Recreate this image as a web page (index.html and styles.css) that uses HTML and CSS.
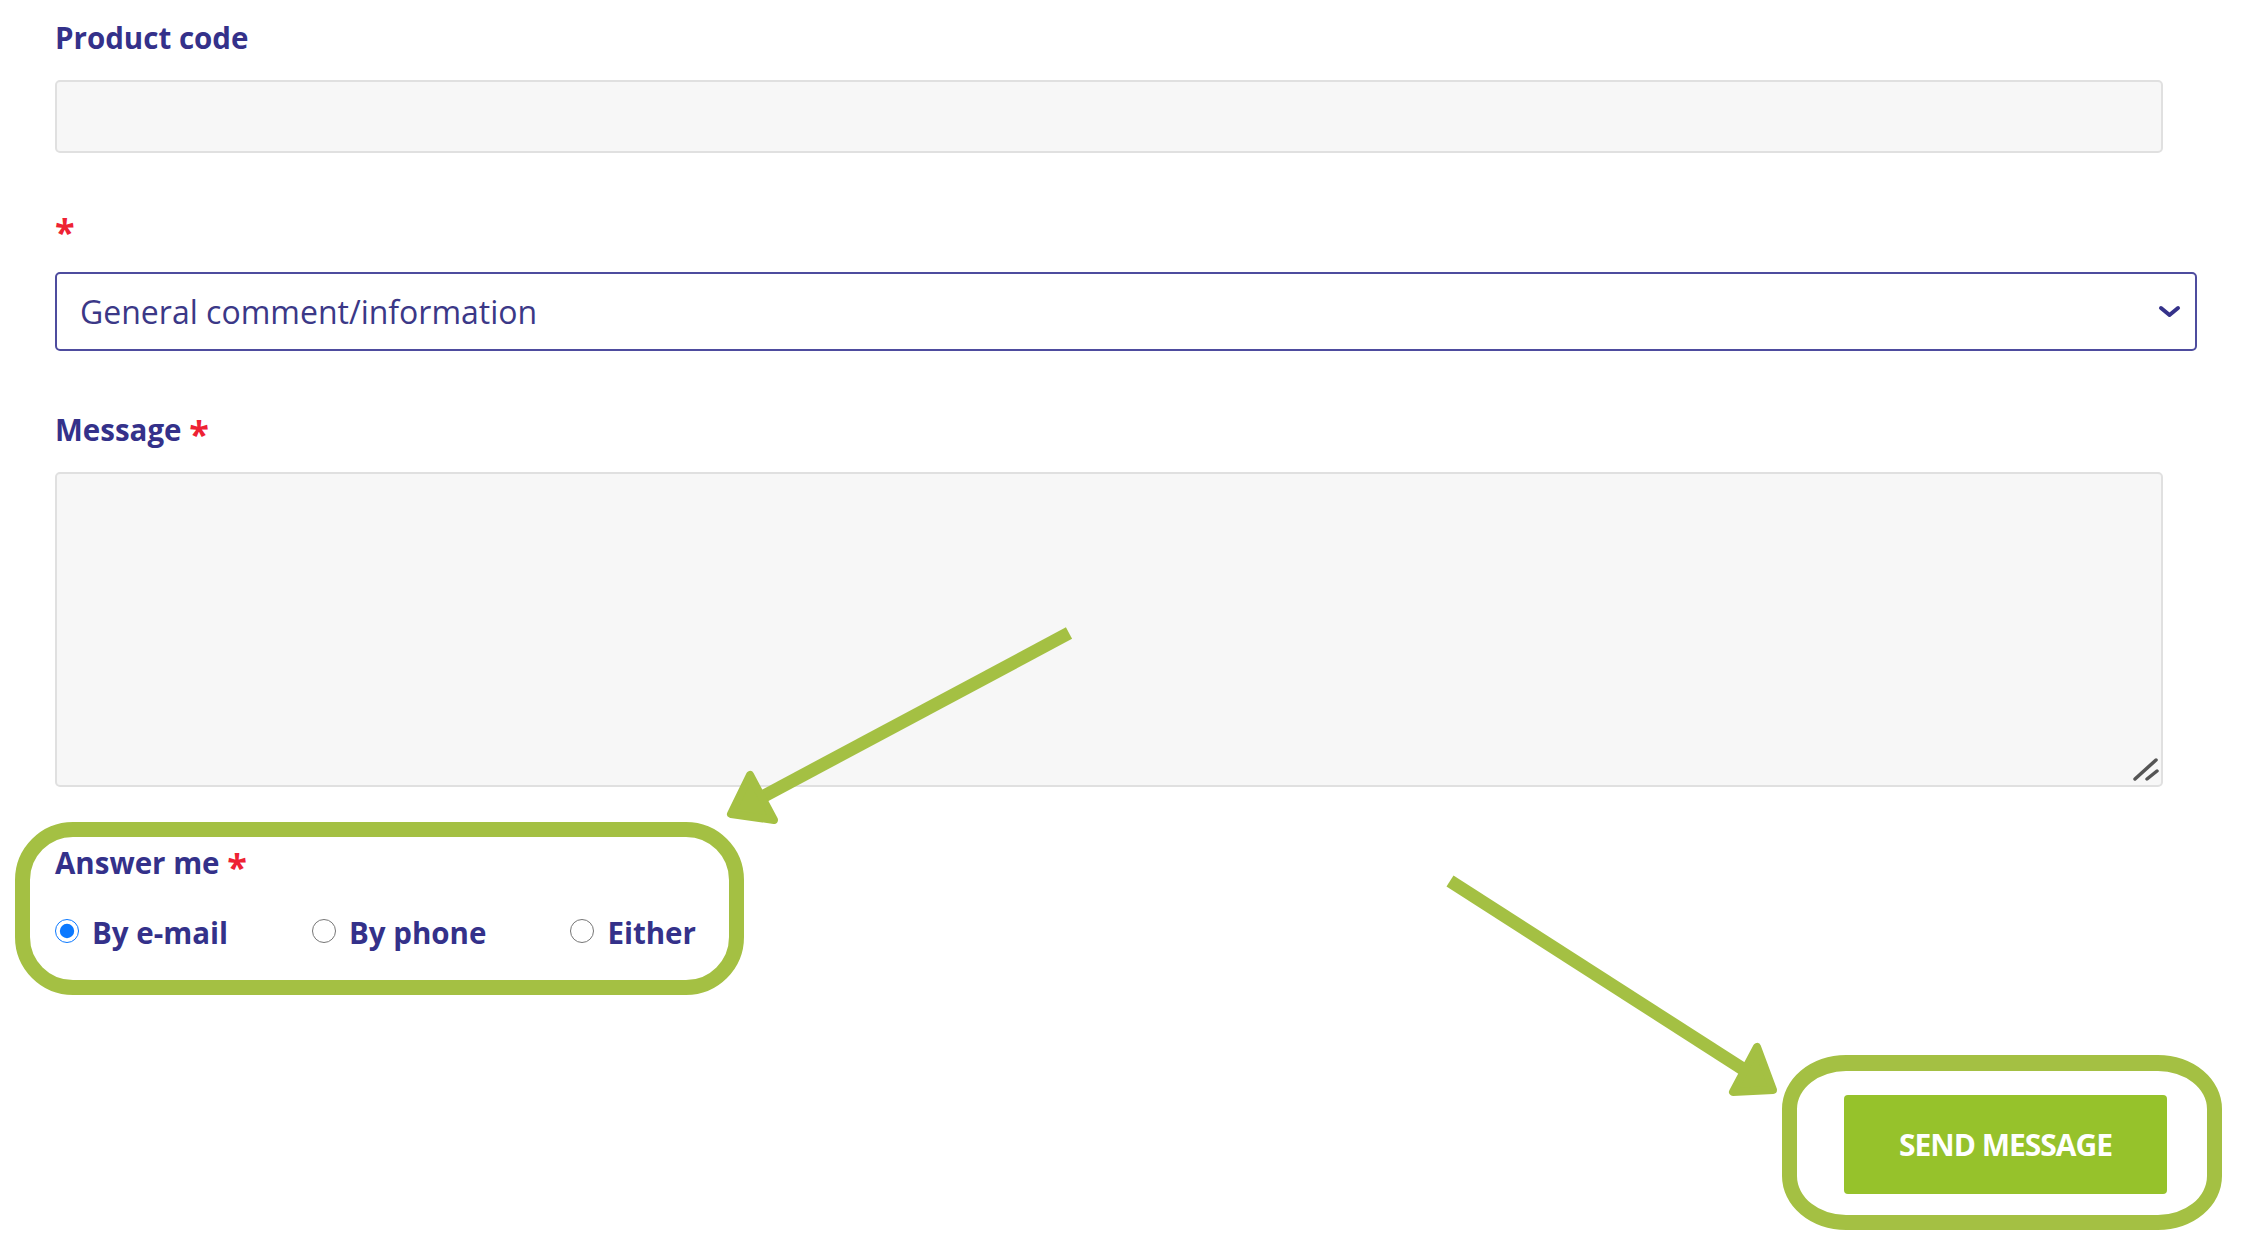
FILE: index.html
```html
<!DOCTYPE html>
<html lang="en">
<head>
<meta charset="utf-8">
<title>Contact form</title>
<link rel="stylesheet" href="styles.css">
</head>
<body>
<form class="contact">
  <div class="field">
    <label class="lbl" for="pc">Product code</label>
    <input class="txt" id="pc" type="text">
  </div>
  <div class="field field-subject">
    <label class="lbl" for="subj"><span class="req">*</span></label>
    <div class="select-wrap">
      <select class="sel" id="subj">
        <option>General comment/information</option>
      </select>
      <svg class="chev" width="23" height="13" viewBox="0 0 23 13"><path d="M3 3 L11.5 10 L20 3" fill="none" stroke="#35328a" stroke-width="4" stroke-linecap="round" stroke-linejoin="round"/></svg>
    </div>
  </div>
  <div class="field field-msg">
    <label class="lbl" for="msg">Message <span class="req">*</span></label>
    <div class="ta-wrap">
      <textarea class="ta" id="msg"></textarea>
      <svg class="grip" width="30" height="30" viewBox="0 0 30 30"><path d="M5 24 L26 5 M17 24 L27 16" stroke="#555" stroke-width="3.5" stroke-linecap="round" fill="none"/></svg>
    </div>
  </div>
  <div class="field answer">
    <div class="lbl">Answer me <span class="req">*</span></div>
    <div class="radios">
      <label class="opt"><input type="radio" name="answer" checked><span>By e-mail</span></label>
      <label class="opt"><input type="radio" name="answer"><span>By phone</span></label>
      <label class="opt"><input type="radio" name="answer"><span>Either</span></label>
    </div>
  </div>
  <div class="actions">
    <button class="send" type="button">SEND MESSAGE</button>
  </div>
</form>

<div class="hl hl-answer"></div>
<div class="hl hl-send"></div>

<svg class="arrows" width="2245" height="1251" viewBox="0 0 2245 1251">
  <g fill="#a4c043" stroke="#a4c043">
    <line x1="1069" y1="633" x2="764" y2="796" stroke-width="13"/>
    <polygon points="750,775 731,814 774,820" stroke-width="8" stroke-linejoin="round"/>
    <line x1="1450" y1="881" x2="1743" y2="1069" stroke-width="13"/>
    <polygon points="1757,1047 1733,1092 1773,1090" stroke-width="8" stroke-linejoin="round"/>
  </g>
</svg>
</body>
</html>
```

FILE: styles.css
```css
html, body {
  margin: 0;
  padding: 0;
  background: #ffffff;
}

body {
  position: relative;
  width: 2245px;
  height: 1251px;
  overflow: hidden;
  font-family: "Open Sans", "Liberation Sans", sans-serif;
}

.contact {
  display: flex;
  flex-direction: column;
  padding: 17px 0 0 55px;
}

.lbl {
  display: block;
  font-weight: 700;
  font-size: 29.5px;
  line-height: 41px;
  height: 41px;
  color: #34318a;
  margin-bottom: 22px;
}

.req {
  color: #ee2233;
  font-size: 36px;
  line-height: 0;
  vertical-align: -6px;
}

.txt {
  display: block;
  box-sizing: border-box;
  width: 2108px;
  height: 73px;
  margin: 0;
  background: #f7f7f7;
  border: 2px solid #e0e0e0;
  border-radius: 5px;
  outline: none;
}

.field-subject {
  margin-top: 54px;
}

.field-subject .lbl {
  margin-bottom: 24px;
}

.select-wrap {
  position: relative;
  width: 2142px;
}

.sel {
  display: block;
  box-sizing: border-box;
  width: 2142px;
  height: 79px;
  margin: 0;
  padding: 0 60px 0 23px;
  appearance: none;
  -webkit-appearance: none;
  background: #ffffff;
  border: 2px solid #4e4c9e;
  border-radius: 5px;
  font-family: "Open Sans", "Liberation Sans", sans-serif;
  font-size: 32px;
  color: #3b3887;
  outline: none;
}

.chev {
  position: absolute;
  right: 16px;
  top: 33px;
  pointer-events: none;
}

.field-msg {
  margin-top: 58px;
}

.ta-wrap {
  position: relative;
  width: 2108px;
  height: 315px;
}

.ta {
  display: block;
  box-sizing: border-box;
  width: 2108px;
  height: 315px;
  margin: 0;
  resize: none;
  background: #f7f7f7;
  border: 2px solid #e0e0e0;
  border-radius: 5px;
  outline: none;
}

.grip {
  position: absolute;
  right: 3px;
  bottom: 2px;
  pointer-events: none;
}

.answer {
  margin-top: 55px;
}

.answer .lbl {
  margin-bottom: 29px;
}

.radios {
  display: flex;
  gap: 84px;
}

.opt {
  display: flex;
  align-items: center;
  gap: 13px;
  font-weight: 700;
  font-size: 29.5px;
  line-height: 41px;
  color: #34318a;
}

.opt input {
  width: 24px;
  height: 24px;
  margin: -3px 0 0 0;
  accent-color: #0a78ff;
}

.actions {
  display: flex;
  justify-content: flex-end;
  width: 2112px;
  margin-top: 142px;
}

.send {
  width: 323px;
  height: 99px;
  border: none;
  border-radius: 4px;
  background: #96c22b;
  color: #ffffff;
  font-family: "Open Sans", "Liberation Sans", sans-serif;
  font-weight: 700;
  font-size: 30px;
  letter-spacing: -1px;
  padding: 0;
}

.hl {
  position: absolute;
  box-sizing: border-box;
  border: 15px solid #a4c043;
  pointer-events: none;
}

.hl-answer {
  left: 15px;
  top: 822px;
  width: 729px;
  height: 173px;
  border-radius: 58px;
}

.hl-send {
  left: 1782px;
  top: 1055px;
  width: 440px;
  height: 175px;
  border-width: 16px 15px 15px 15px;
  border-radius: 64px / 54px;
}

.arrows {
  position: absolute;
  left: 0;
  top: 0;
  pointer-events: none;
}
```
